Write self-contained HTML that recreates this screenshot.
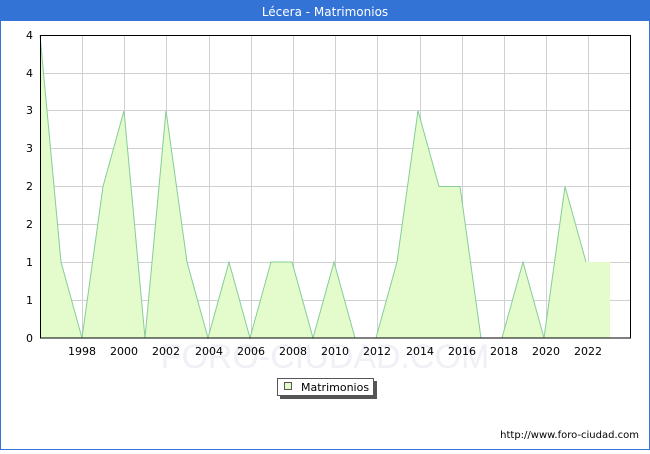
<!DOCTYPE html>
<html><head><meta charset="utf-8"><style>
body{margin:0;width:650px;height:450px;overflow:hidden;background:#fff;font-family:"DejaVu Sans","Liberation Sans",sans-serif}
</style></head><body>
<svg width="650" height="450" xmlns="http://www.w3.org/2000/svg" font-family="DejaVu Sans, Liberation Sans, sans-serif">
<rect x="0.5" y="0.5" width="649" height="449" fill="#fff" stroke="#3473d6"/>
<rect x="0" y="0" width="650" height="21" fill="#3473d6"/>
<text x="325" y="16" fill="#fff" font-size="12" text-anchor="middle">Lécera - Matrimonios</text>
<g stroke="#d0d0d0" stroke-width="1">
<line x1="40" y1="300.5" x2="630" y2="300.5"/><line x1="40" y1="262.5" x2="630" y2="262.5"/>
<line x1="40" y1="224.5" x2="630" y2="224.5"/><line x1="40" y1="186.5" x2="630" y2="186.5"/>
<line x1="40" y1="148.5" x2="630" y2="148.5"/><line x1="40" y1="110.5" x2="630" y2="110.5"/>
<line x1="40" y1="73.5" x2="630" y2="73.5"/>
<line x1="82.5" y1="35" x2="82.5" y2="338"/><line x1="124.5" y1="35" x2="124.5" y2="338"/>
<line x1="166.5" y1="35" x2="166.5" y2="338"/><line x1="209.5" y1="35" x2="209.5" y2="338"/>
<line x1="251.5" y1="35" x2="251.5" y2="338"/><line x1="293.5" y1="35" x2="293.5" y2="338"/>
<line x1="335.5" y1="35" x2="335.5" y2="338"/><line x1="377.5" y1="35" x2="377.5" y2="338"/>
<line x1="420.5" y1="35" x2="420.5" y2="338"/><line x1="462.5" y1="35" x2="462.5" y2="338"/>
<line x1="504.5" y1="35" x2="504.5" y2="338"/><line x1="546.5" y1="35" x2="546.5" y2="338"/>
<line x1="588.5" y1="35" x2="588.5" y2="338"/>
</g>
<text x="325" y="368" font-size="34" fill="#f0f0f6" text-anchor="middle" font-family="Liberation Sans, sans-serif">FORO-CIUDAD.COM</text>
<polygon fill="#e4fccc" points="40,35 61,262 82,338 103,186.5 124,110.75 145,338 166,110.75 187,262 208,338 229,262 250,338 271,262 292,262 313,338 334,262 355,338 376,338 397,262 418,110.75 439,186.5 460,186.5 481,338 502,338 523,262 544,338 565,186.5 586,262 610,262 610,338 40,338"/>
<polyline fill="none" stroke="#86cc9a" stroke-width="1" points="40,35 61,262 82,338 103,186.5 124,110.75 145,338 166,110.75 187,262 208,338 229,262 250,338 271,262 292,262 313,338 334,262 355,338 376,338 397,262 418,110.75 439,186.5 460,186.5 481,338 502,338 523,262 544,338 565,186.5 586,262"/>
<rect x="40.5" y="35.5" width="590" height="302.5" fill="none" stroke="#000"/>
<g font-size="11" fill="#000" text-anchor="end">
<text x="33" y="342">0</text><text x="33" y="304">1</text><text x="33" y="266">1</text>
<text x="33" y="228">2</text><text x="33" y="190">2</text><text x="33" y="152">3</text>
<text x="33" y="114">3</text><text x="33" y="77">4</text><text x="33" y="39">4</text>
</g>
<g font-size="11" fill="#000" text-anchor="middle">
<text x="82" y="355">1998</text><text x="124" y="355">2000</text><text x="166" y="355">2002</text>
<text x="209" y="355">2004</text><text x="251" y="355">2006</text><text x="293" y="355">2008</text>
<text x="335" y="355">2010</text><text x="377" y="355">2012</text><text x="420" y="355">2014</text>
<text x="462" y="355">2016</text><text x="504" y="355">2018</text><text x="546" y="355">2020</text>
<text x="588" y="355">2022</text>
</g>
<rect x="280" y="381" width="97" height="18" fill="#555"/>
<rect x="277.5" y="378.5" width="96" height="17" fill="#fff" stroke="#555"/>
<rect x="284.5" y="382.5" width="7" height="7" fill="#e4fccc" stroke="#555"/>
<text x="301" y="391" font-size="11">Matrimonios</text>
<text x="639" y="438" font-size="10" text-anchor="end">http://www.foro-ciudad.com</text>
</svg>
</body></html>
